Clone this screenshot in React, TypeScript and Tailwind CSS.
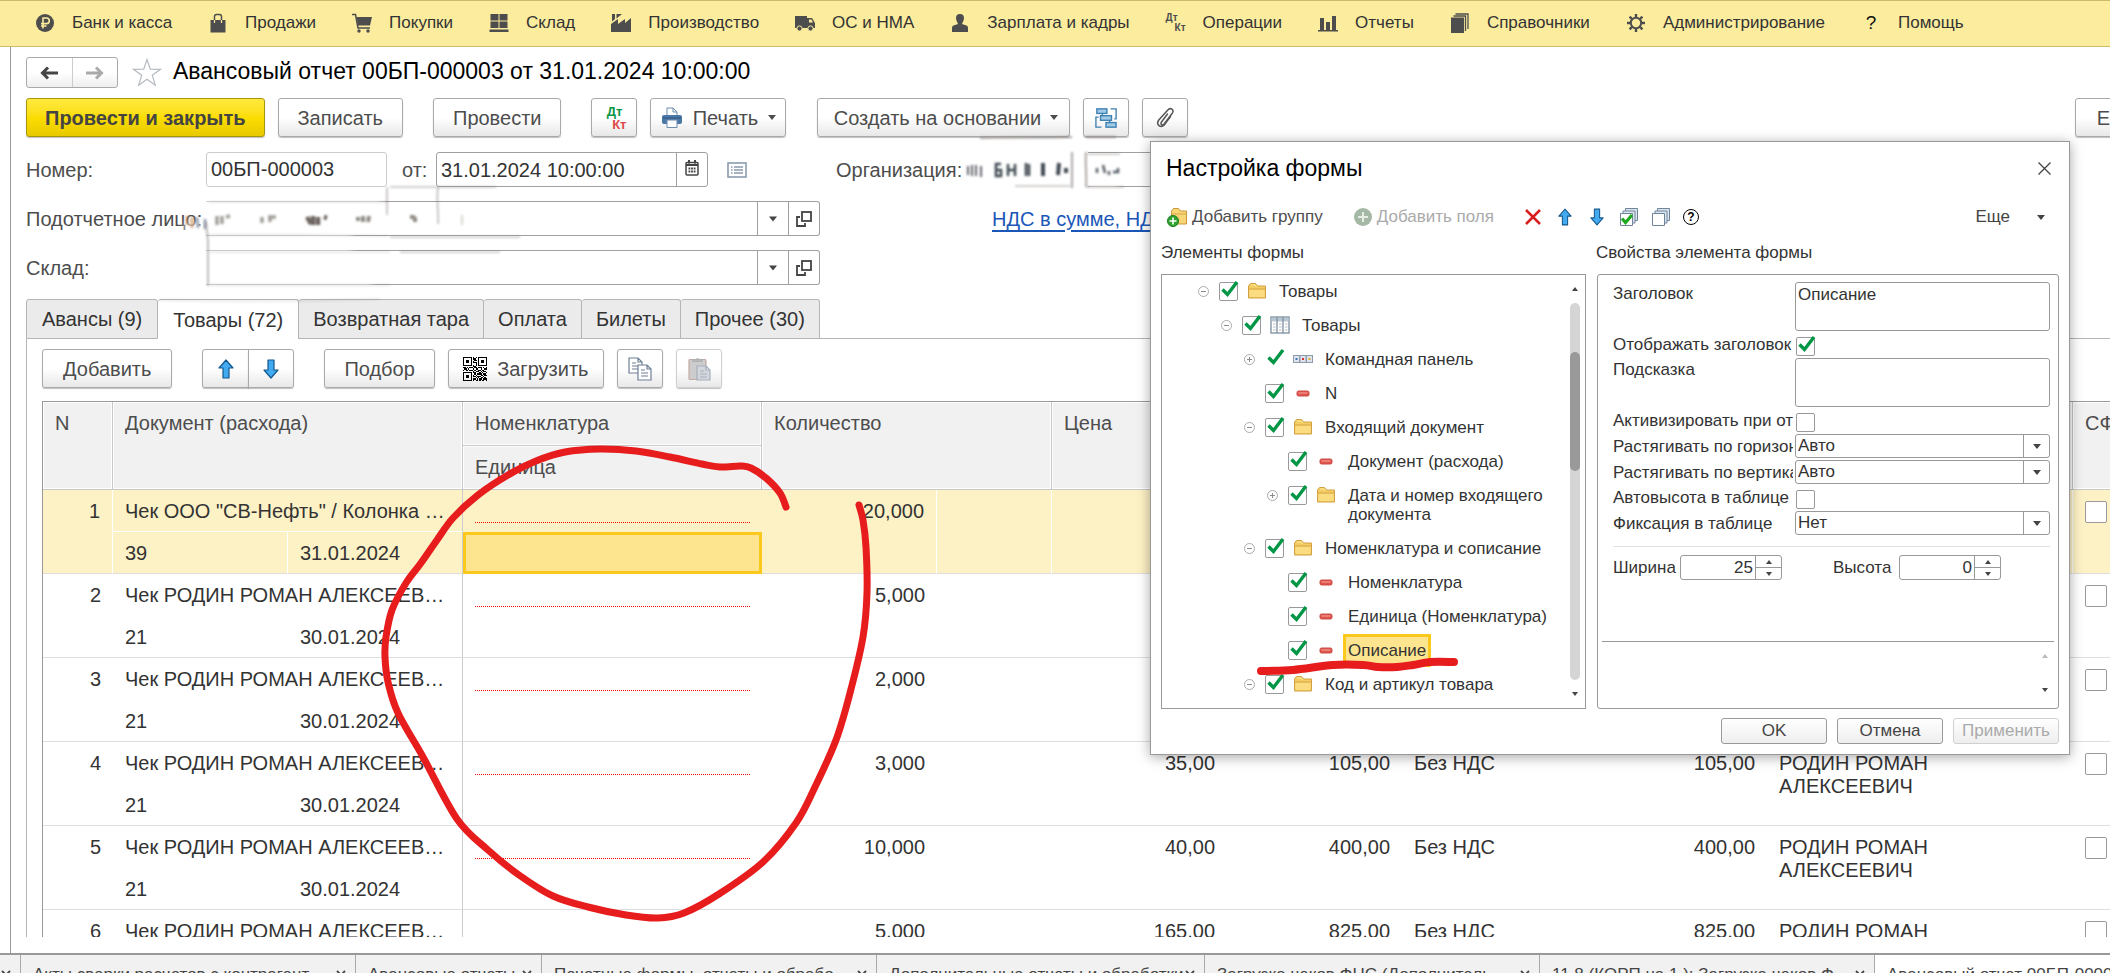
import React from 'react';
import clsx from 'clsx';

/* ---------- icons ---------- */

type IconProps = { className?: string };

const MENU_ICON = 'h-5 w-5 shrink-0 text-[#4d4d4d]';

const RubleIcon = () => (
  <svg viewBox="0 0 20 20" className={MENU_ICON}>
    <circle cx="10" cy="10" r="9" fill="currentColor" />
    <path d="M8 15.500V5h3.500a2.800 2.800 0 010 5.600H6M6 13h5.500" fill="none" stroke="#fbec9e" strokeWidth="1.600" />
  </svg>
);

const BagIcon = () => (
  <svg viewBox="0 0 20 20" className={MENU_ICON}>
    <path d="M2.500 7h15v12.500h-15z" fill="currentColor" />
    <path d="M6.500 10V4a2 2 0 012-2.500h3a2 2 0 012 2.500v6" fill="none" stroke="currentColor" strokeWidth="1.500" />
    <path d="M6.500 7v3M13.500 7v3" stroke="#fbec9e" strokeWidth="1.200" />
  </svg>
);

const CartIcon = () => (
  <svg viewBox="0 0 20 20" className={MENU_ICON}>
    <path d="M0 1.500h3.500L6 15h12" fill="none" stroke="currentColor" strokeWidth="1.500" />
    <path d="M4.500 4H20l-2 8.500H6z" fill="currentColor" />
    <circle cx="7" cy="18" r="1.700" fill="currentColor" />
    <circle cx="16" cy="18" r="1.700" fill="currentColor" />
  </svg>
);

const StockIcon = () => (
  <svg viewBox="0 0 20 20" className={MENU_ICON} fill="currentColor">
    <path d="M1.500 1h8v6.500h-8zM10.500 1h8v6.500h-8zM1.500 8.500h8V15h-8zM10.500 8.500h8V15h-8zM.500 16.500h19V19H.500z" />
  </svg>
);

const FactoryIcon = () => (
  <svg viewBox="0 0 20 20" className={MENU_ICON} fill="currentColor">
    <path d="M0 19v-8l7-5v5l7-5v4l6-5v14zM1 1h3v5l-3 2.500zM5.500 1H11L5.500 5.500z" />
  </svg>
);

const TruckIcon = () => (
  <svg viewBox="0 0 20 20" className={MENU_ICON}>
    <path d="M0 3h12v12H0zM12 5h5l3 5v5h-8z" fill="currentColor" />
    <path d="M14 6.500h2.500l1.500 3h-4z" fill="#fbec9e" />
    <circle cx="4.500" cy="15.500" r="2.600" fill="currentColor" stroke="#fbec9e" />
    <circle cx="15.500" cy="15.500" r="2.600" fill="currentColor" stroke="#fbec9e" />
  </svg>
);

const PersonIcon = () => (
  <svg viewBox="0 0 20 20" className={MENU_ICON} fill="currentColor">
    <path d="M10 1c3 0 4.200 2 4 4.500S12 10.500 12 11l4.500 1.500c1.500.600 1.500 2 1.500 3.500v3H2v-3c0-1.500 0-2.900 1.500-3.500L8 11c0-.500-1.800-3-2-5.500S7 1 10 1z" />
  </svg>
);

const DtKtMenuIcon = () => (
  <span className="flex h-5 w-5 shrink-0 flex-col justify-center text-[10px] leading-[10px] font-bold text-[#4d4d4d]">
    <span>Дт</span>
    <span className="self-end">Кт</span>
  </span>
);

const ChartIcon = () => (
  <svg viewBox="0 0 20 20" className={MENU_ICON} fill="currentColor">
    <path d="M0 17h20v1.500H0zM2 5h4v12H2zM8 9h4v8H8zM14 3h4v14h-4z" />
  </svg>
);

const BooksIcon = () => (
  <svg viewBox="0 0 20 20" className={MENU_ICON}>
    <path d="M1 4.500h13V20H1z" fill="currentColor" />
    <path d="M3.500 3h12v15M5.500 1h12.500v15" fill="none" stroke="currentColor" strokeWidth="1.300" />
  </svg>
);

const GearIcon = () => (
  <svg viewBox="0 0 20 20" className={MENU_ICON} fill="none" stroke="currentColor">
    <circle cx="10" cy="10" r="5.200" strokeWidth="2" />
    <path
      d="M10 1v3M10 16v3M1 10h3M16 10h3M3.600 3.600l2.200 2.200M14.200 14.200l2.200 2.200M3.600 16.400l2.200-2.200M14.200 5.800l2.200-2.200"
      strokeWidth="2.400"
    />
  </svg>
);

const QuestionIcon = () => (
  <span className="w-5 shrink-0 text-center text-[19px] leading-5 text-[#111]">?</span>
);

const ArrowUp = ({ className }: IconProps) => (
  <svg viewBox="0 0 16 20" className={className}>
    <path d="M8 1l7 8h-4v10H5V9H1z" fill="#42aaf0" stroke="#14588c" strokeWidth="1.200" strokeLinejoin="round" />
  </svg>
);

const ArrowDown = ({ className }: IconProps) => (
  <svg viewBox="0 0 16 20" className={className}>
    <path d="M8 19l7-8h-4V1H5v10H1z" fill="#42aaf0" stroke="#14588c" strokeWidth="1.200" strokeLinejoin="round" />
  </svg>
);

const Caret = ({ className }: IconProps) => (
  <svg viewBox="0 0 8 5" className={clsx('h-[5px] w-2 shrink-0', className)}>
    <path d="M0 0h8L4 5z" fill="currentColor" />
  </svg>
);

const CaretUp = ({ className }: IconProps) => (
  <svg viewBox="0 0 6 4" className={clsx('h-1 w-[6px] shrink-0', className)}>
    <path d="M0 4h6L3 0z" fill="currentColor" />
  </svg>
);

const PrinterIcon = () => (
  <svg viewBox="0 0 22 22" className="h-[22px] w-[22px]">
    <path d="M6 9V1h6l4 4v4" fill="#fff" stroke="#6b8bab" />
    <path d="M12 1v4h4" fill="none" stroke="#6b8bab" />
    <rect x="1" y="8" width="20" height="9" rx="2" fill="#4b77a6" />
    <path d="M2 11h18" stroke="#2f5580" />
    <path d="M6 13h10v7.500H6z" fill="#fff" stroke="#6b8bab" />
  </svg>
);

const StructureIcon = () => (
  <svg viewBox="0 0 24 24" className="h-[22px] w-[22px]" fill="#9fcbe9" stroke="#3f80b0" strokeWidth="1.500">
    <rect x="2" y="2" width="11" height="5" />
    <rect x="6" y="9.500" width="12" height="5" />
    <rect x="12" y="17" width="11" height="5" />
    <path d="M17 2h6v11h-2M4 11H1v11h6M8 7v2.500M16 14.500V17" fill="none" />
  </svg>
);

const ClipIcon = () => (
  <svg viewBox="0 0 20 22" className="h-[22px] w-5" fill="none" stroke="#555" strokeWidth="1.500" strokeLinecap="round">
    <path d="M12.500 7l-6 8c-1.500 2.300 1 4 2.600 2l8-10.500c2.600-3.700-1.600-6.700-4.500-3.200L3.800 13c-3.300 4.800 2 8.800 5.700 4.600" />
    <path d="M9.500 17.600l6-8" />
  </svg>
);

const CalendarIcon = () => (
  <svg viewBox="0 0 14 16" className="h-4 w-[14px]">
    <rect x="1" y="2.500" width="12" height="12.500" rx="1" fill="#fff" stroke="#444" strokeWidth="1.500" />
    <path d="M1 5h12" stroke="#444" strokeWidth="2" />
    <path d="M4 0v3.500M10 0v3.500" stroke="#444" strokeWidth="2" />
    <path d="M3.500 8.500h7M3.500 11.500h7" stroke="#444" strokeWidth="1.800" strokeDasharray="1.800 .800" />
  </svg>
);

const ListIcon = () => (
  <svg viewBox="0 0 20 16" className="h-4 w-5" fill="#fff" stroke="#8b9bb0">
    <rect x="1" y="1" width="18" height="14" strokeWidth="1.600" />
    <path d="M4 5h1.500M4 8h1.500M4 11h1.500M7 5h9M7 8h9M7 11h9" strokeWidth="1.400" />
  </svg>
);

const OpenIcon = () => (
  <svg viewBox="0 0 16 16" className="h-4 w-4" fill="none" stroke="#444" strokeWidth="1.800">
    <rect x="6" y="1" width="9" height="9" />
    <path d="M4 6H1v9h8v-3" />
  </svg>
);

const QR_ROWS = [
  '1111111010101111111',
  '1000001011001000001',
  '1011101001101011101',
  '1011101010001011101',
  '1011101011101011101',
  '1000001000101000001',
  '1111111010101111111',
  '0000000011000000000',
  '1101011101101110101',
  '0110100010110010011',
  '1011011101001101100',
  '0000000010111010110',
  '1111111011000101001',
  '1000001001011110110',
  '1011101010100011011',
  '1011101011011100100',
  '1011101000101011010',
  '1000001011010110111',
  '1111111010110101101',
];

const QrIcon = () => (
  <svg viewBox="0 0 19 19" className="h-6 w-6" shapeRendering="crispEdges">
    {QR_ROWS.map((row, y) =>
      [...row].map((bit, x) => (bit === '1' ? <rect key={`${x}-${y}`} x={x} y={y} width="1" height="1" /> : null)),
    )}
  </svg>
);

const CopyIcon = () => (
  <svg viewBox="0 0 24 24" className="h-6 w-6" fill="#fff" stroke="#6f7f95" strokeWidth="1.200">
    <path d="M1 1h9l4 4v11H1zM10 1v4h4M4 6h4M4 9h6M4 12h6" />
    <path d="M10 8h9l4 4v11H10zM19 8v4h4M13 13h4M13 16h7M13 19h7" />
  </svg>
);

const PasteIcon = () => (
  <svg viewBox="0 0 24 24" className="h-6 w-6" fill="#ccc" stroke="#b0b0b0" strokeWidth="1.200">
    <rect x="2" y="2.500" width="17" height="20" rx="1" stroke="#c4aaa2" />
    <path d="M6 4.500h9v-2h-3a2 2 0 00-3 0H6z" fill="#b8b8b8" />
    <path d="M10 9h9l4 4v10H10zM19 9v4h4M13 14h4M13 17h7M13 20h7" fill="#d3d7dc" stroke="#a5afbc" />
  </svg>
);

const FolderIcon = () => (
  <svg viewBox="0 0 20 18" className="h-[18px] w-5 shrink-0">
    <path d="M1.500 16V4l2-2.500h5L10.500 4h8v12z" fill="#f3cd62" stroke="#d3a043" />
    <path d="M2.500 7.500h15V15h-15z" fill="#fbdc81" />
    <path d="M2 7h16" stroke="#d8a548" />
    <path d="M4 3h4l1.500 2" fill="none" stroke="#fdea9f" />
  </svg>
);

const AddFolderIcon = () => (
  <svg viewBox="0 0 22 20" className="h-5 w-[22px]">
    <path d="M5.500 17V4l2-2.500h5L14.500 4h6v13z" fill="#f8d676" stroke="#c9973c" />
    <path d="M6 7h14" stroke="#d8a548" />
    <circle cx="7" cy="14" r="5.500" fill="#2fa32f" stroke="#1c7c1c" />
    <path d="M7 10.500v7M3.500 14h7" stroke="#fff" strokeWidth="1.600" />
  </svg>
);

const AddFieldIcon = () => (
  <svg viewBox="0 0 20 20" className="h-5 w-5">
    <circle cx="10" cy="10" r="9" fill="#a5b8a5" />
    <path d="M10 5v10M5 10h10" stroke="#e6ede6" strokeWidth="2" />
  </svg>
);

const TableIcon = () => (
  <svg viewBox="0 0 20 18" className="h-[18px] w-5 shrink-0">
    <rect x="1" y="1" width="18" height="16" fill="#fff" stroke="#8494a6" strokeWidth="1.400" />
    <path d="M1.500 2h17v3.500h-17z" fill="#b9c6d4" />
    <path d="M7 1v16M13 1v16" stroke="#8494a6" strokeWidth="1.400" />
    <path d="M3 8h2.500M3 11h2.500M3 14h2.500M9 8h2.500M9 11h2.500M9 14h2.500M15 8h2.500M15 11h2.500M15 14h2.500" stroke="#b4bcc6" />
  </svg>
);

const PanelIcon = () => (
  <svg viewBox="0 0 20 18" className="h-[18px] w-5 shrink-0" fill="#dfe5ec" stroke="#8f9cab">
    <rect x=".500" y="5.500" width="6" height="7" />
    <rect x="7" y="5.500" width="6" height="7" />
    <rect x="13.500" y="5.500" width="6" height="7" />
    <path d="M2.500 9h2" stroke="#3f76b5" strokeWidth="2" />
    <path d="M9 9h2" stroke="#e22f2f" strokeWidth="2" />
    <path d="M15.500 9h2" stroke="#e0a92a" strokeWidth="2" />
  </svg>
);

const FieldIcon = () => (
  <svg viewBox="0 0 20 18" className="h-[18px] w-5 shrink-0">
    <rect x="4" y="7" width="12" height="5" rx="1.500" fill="#e0524b" stroke="#c94c46" />
    <path d="M5.500 9h9" stroke="#f5a8a3" />
  </svg>
);

const StackIcon = ({ checked }: { checked?: boolean }) => (
  <svg viewBox="0 0 20 20" className="h-5 w-5" fill="#dce6f0" stroke="#6f8499">
    <path d="M6.500 1.500h12v12h-12z" />
    <path d="M4 4h12v12H4z" />
    <path d="M1.500 6.500h12v12h-12z" fill="#fff" />
    {checked && <path d="M3 11.500l3.500 4L13 8" fill="none" stroke="#1eaa1e" strokeWidth="3.200" />}
  </svg>
);

/* ---------- controls ---------- */

interface ButtonProps extends React.ButtonHTMLAttributes<HTMLButtonElement> {
  primary?: boolean;
}

const Button = ({ primary, className, children, ...props }: ButtonProps) => (
  <button
    type="button"
    className={clsx(
      'flex h-[39px] shrink-0 items-center justify-center rounded-[3px] border text-xl whitespace-nowrap shadow-[0_1px_1px_rgba(0,0,0,0.25)]',
      primary
        ? 'border-[#a8960c] bg-linear-to-b from-[#ffe93c] via-[#fbdd00] to-[#e8c900] font-bold text-[#444]'
        : 'border-[#a9a9a9] bg-linear-to-b from-white from-50% to-[#e8e8e8] text-[#4d4d4d] disabled:border-[#d0d0d0]',
      className,
    )}
    {...props}
  >
    {children}
  </button>
);

interface CheckboxProps extends React.InputHTMLAttributes<HTMLInputElement> {
  bare?: boolean;
  boxSize?: string;
}

const Checkbox = ({ bare, boxSize = 'h-[19px] w-[19px]', ...props }: CheckboxProps) => (
  <span className={clsx('relative block shrink-0', boxSize)}>
    <input
      type="checkbox"
      className={clsx(
        'peer block h-full w-full appearance-none rounded-[2px] border bg-white',
        bare ? 'border-transparent' : 'border-[#999]',
      )}
      {...props}
    />
    <svg
      viewBox="0 0 19 19"
      className="pointer-events-none absolute inset-0 hidden h-full w-full overflow-visible peer-checked:block"
    >
      <path d="M3.500 7.500l5 5L18 0" fill="none" stroke="#009646" strokeWidth="3.400" />
    </svg>
  </span>
);

interface SelectProps {
  id: string;
  value: string;
}

const Select = ({ id, value }: SelectProps) => (
  <div className="relative">
    <select
      id={id}
      defaultValue={value}
      className="block h-6 w-full appearance-none rounded-[3px] border border-[#999] bg-white pl-[2px] text-[17px] leading-[20px]"
    >
      <option>Авто</option>
      <option>Да</option>
      <option>Нет</option>
    </select>
    <span className="pointer-events-none absolute inset-y-0 right-0 flex w-[27px] items-center justify-center border-l border-[#999]">
      <Caret className="text-[#444]" />
    </span>
  </div>
);

const Spinner = ({ id, label, value, className }: { id: string; label: string; value: string; className: string }) => (
  <div className={clsx('flex shrink-0 items-center', className)}>
    <label htmlFor={id} className="flex-1 leading-[22px]">
      {label}
    </label>
    <div className="flex h-[25px] w-[102px] rounded-[3px] border border-[#999]">
      <input id={id} defaultValue={value} className="w-full min-w-0 pr-[2px] text-right" />
      <span className="flex w-[26px] shrink-0 flex-col border-l border-[#999] text-[#444]">
        <button type="button" aria-label="Увеличить" className="flex flex-1 items-center justify-center border-b border-[#999]">
          <CaretUp />
        </button>
        <button type="button" aria-label="Уменьшить" className="flex flex-1 items-center justify-center">
          <CaretUp className="rotate-180" />
        </button>
      </span>
    </div>
  </div>
);

/* ---------- main menu ---------- */

const MENU: [string, () => React.ReactElement][] = [
  ['Банк и касса', RubleIcon],
  ['Продажи', BagIcon],
  ['Покупки', CartIcon],
  ['Склад', StockIcon],
  ['Производство', FactoryIcon],
  ['ОС и НМА', TruckIcon],
  ['Зарплата и кадры', PersonIcon],
  ['Операции', DtKtMenuIcon],
  ['Отчеты', ChartIcon],
  ['Справочники', BooksIcon],
  ['Администрирование', GearIcon],
  ['Помощь', QuestionIcon],
];

const MainMenu = () => (
  <nav className="flex h-[47px] shrink-0 items-center gap-9 overflow-hidden border-y border-[#cdbb6c] bg-[#fbec9e] pb-[2px] pl-[35px]">
    {MENU.map(([title, Icon]) => (
      <a key={title} href="#" className="flex shrink-0 items-center gap-[17px] text-[17px] whitespace-nowrap text-[#333]">
        <Icon />
        {title}
      </a>
    ))}
  </nav>
);

/* ---------- document form ---------- */

const FormHeader = () => (
  <div className="flex h-[31px] items-center">
    <div className="flex h-[31px] w-[92px] rounded-[3px] border border-[#aaa] bg-linear-to-b from-white from-50% to-[#eee]">
      <button type="button" aria-label="Назад" className="flex flex-1 items-center justify-center border-r border-[#ccc]">
        <svg viewBox="0 0 18 14" className="h-[14px] w-[18px]" fill="none" stroke="#444" strokeWidth="3">
          <path d="M18 7H3M8 1.500L2.500 7 8 12.500" />
        </svg>
      </button>
      <button type="button" aria-label="Вперед" className="flex flex-1 items-center justify-center">
        <svg viewBox="0 0 18 14" className="h-[14px] w-[18px]" fill="none" stroke="#aaa" strokeWidth="3">
          <path d="M0 7h15M10 1.500L15.500 7 10 12.500" />
        </svg>
      </button>
    </div>
    <button type="button" aria-label="В избранное" className="ml-[14px]">
      <svg viewBox="0 0 30 29" className="h-[29px] w-[30px]" fill="#fff" stroke="#b5bac0" strokeWidth="1.200">
        <path d="M15 1.500l3.300 9.700 10.200.100-8.200 6 3 9.900-8.300-6-8.300 6 3-9.900-8.200-6 10.200-.100z" />
      </svg>
    </button>
    <h1 className="ml-[11px] pb-[2px] text-[23px] leading-[29px] text-black">
      Авансовый отчет 00БП-000003 от 31.01.2024 10:00:00
    </h1>
  </div>
);

const CommandBar = () => (
  <div className="mt-[10px] flex">
    <Button primary className="px-[18px]">
      Провести и закрыть
    </Button>
    <Button className="ml-[13px] px-[19px]">Записать</Button>
    <Button className="ml-[30px] px-[19px]">Провести</Button>
    <Button aria-label="Проводки" className="ml-[30px] w-[46px]">
      <span className="flex w-6 flex-col text-[13px] leading-[13px] font-bold">
        <span className="text-[#0a9646]">Дт</span>
        <span className="self-end text-[#e04848]">Кт</span>
      </span>
    </Button>
    <Button className="ml-[13px] w-[136px] gap-[10px]">
      <PrinterIcon />
      Печать
      <Caret />
    </Button>
    <Button className="ml-[31px] w-[253px] gap-[9px] pl-1">
      Создать на основании
      <Caret />
    </Button>
    <Button aria-label="Структура подчиненности" className="ml-[13px] w-[46px]">
      <StructureIcon />
    </Button>
    <Button aria-label="Файлы" className="ml-[13px] w-[46px]">
      <ClipIcon />
    </Button>
    <Button className="-mr-[65px] ml-auto w-[100px] gap-2">
      Еще
      <Caret />
    </Button>
  </div>
);

const LookupField = ({ id }: { id: string }) => (
  <div className="flex h-[35px] w-[614px] shrink-0 rounded-r-[3px] border border-l-0 border-[#a0a0a0] text-[#444]">
    <input id={id} className="min-w-0 flex-1 px-1" />
    <button type="button" aria-label="Выбрать" className="flex w-[31px] items-center justify-center border-l border-[#a0a0a0]">
      <Caret className="h-[6px]" />
    </button>
    <button type="button" aria-label="Открыть" className="flex w-[31px] items-center justify-center border-l border-[#a0a0a0]">
      <OpenIcon />
    </button>
  </div>
);

/* Wiped out personal data: soft white patches with leftovers of glyphs and borders. */
const Smears = () => (
  <svg className="pointer-events-none absolute top-0 left-0 h-[310px] w-[1150px]" viewBox="0 0 1150 310">
    <defs>
      <filter id="soft" x="-20%" y="-50%" width="140%" height="200%">
        <feGaussianBlur stdDeviation="3" />
      </filter>
      <filter id="thin" x="-20%" y="-50%" width="140%" height="200%">
        <feGaussianBlur stdDeviation=".800" />
      </filter>
    </defs>
    <g fill="#fff" opacity=".650" filter="url(#soft)">
      <rect x="202" y="196" width="180" height="10" />
      <rect x="202" y="232" width="150" height="8" />
      <rect x="202" y="246" width="150" height="8" />
      <rect x="202" y="281" width="170" height="8" />
      <rect x="1088" y="183" width="30" height="7" />
      <rect x="184" y="222" width="20" height="12" />
    </g>
    <g fill="none" stroke="#8a8480" filter="url(#thin)">
      <path d="M387 187v28M438 187c-2 14 1 26 0 37" strokeWidth="1.500" opacity=".600" />
      <path d="M206 222l2 20v44" strokeWidth="1.800" opacity=".600" />
      <path d="M208 202h180M208 235h100l80 1M210 252h180M210 285h180M160 300c90 2 150 1 220-1" opacity=".350" />
      <path d="M390 187h106M390 237h130M400 252h100" strokeWidth="1.500" opacity=".500" />
      <path d="M1072 152v36M1086 152c-1 12 1 24 0 35" strokeWidth="2" opacity=".700" />
      <path d="M1088 154h32M1015 186h55M1086 187h38" strokeWidth="2" opacity=".400" />
      <path d="M980 138c40-1 60 0 92-1M1086 137h30" strokeWidth="2" opacity=".700" />
    </g>
    <g stroke="#4a4038" fill="none" filter="url(#thin)">
      <path d="M187 216v9M192 217v11" stroke="#c08048" strokeWidth="2.500" opacity=".700" />
      <path d="M197 217l1 11M205 219v10" stroke="#5f6c86" strokeWidth="2.500" opacity=".700" />
      <path d="M217 216v9M222 216v8M226 217l4-1M262 217v6M268 217h8M270 217v5" strokeWidth="3.500" opacity=".500" />
      <path d="M307 217l4 7M313 216v9M318 217v8M324 217l3 1" strokeWidth="4.500" opacity=".800" />
      <path d="M358 217v4M363 216v6M369 216l-1 6M410 217h5M415 217v5" strokeWidth="4" opacity=".600" />
      <path d="M462 215v10" strokeWidth="1.500" opacity=".300" />
    </g>
    <g stroke="#222a35" fill="none" filter="url(#thin)">
      <path d="M968 166v9M972 165v11M976 165v11M981 166v11" strokeWidth="2" opacity=".700" />
      <path d="M1001 164h-5v12h5v-6h-4M1008 164v12M1015 164v12M1008 170h6M1026 163v13M1029 164v12" strokeWidth="2.500" opacity=".850" />
      <path d="M1043 163v13M1059 163l-1 12M1066 168v5" strokeWidth="4" opacity=".850" />
      <path d="M1097 168v5M1103 165l2 8M1109 171v4M1113 172h5v-4" strokeWidth="2.500" opacity=".750" />
    </g>
  </svg>
);

const FormFields = () => (
  <div className="mt-[15px] flex flex-col gap-[14px] text-xl text-[#4d4d4d]">
    <div className="flex h-[35px] items-center">
      <label htmlFor="number" className="w-[180px] shrink-0">
        Номер:
      </label>
      <input
        id="number"
        defaultValue="00БП-000003"
        className="h-[35px] w-[181px] shrink-0 rounded-[3px] border border-[#ccc] px-1 text-[#333]"
      />
      <label htmlFor="date" className="ml-[15px] w-[34px] shrink-0">
        от:
      </label>
      <div className="flex h-[35px] w-[272px] shrink-0 rounded-[3px] border border-[#a0a0a0]">
        <input id="date" defaultValue="31.01.2024 10:00:00" className="min-w-0 flex-1 px-1 text-[#333]" />
        <button type="button" aria-label="Календарь" className="flex w-[31px] items-center justify-center border-l border-[#a0a0a0] pb-1">
          <CalendarIcon />
        </button>
      </div>
      <button type="button" aria-label="Реквизиты" className="ml-[19px] shrink-0">
        <ListIcon />
      </button>
      <label htmlFor="org" className="ml-[89px] w-[252px] shrink-0">
        Организация:
      </label>
      <input id="org" className="h-[35px] w-[300px] shrink-0 border-y border-[#a0a0a0]" />
    </div>
    <div className="flex h-[35px] items-center">
      <label htmlFor="person" className="w-[180px] shrink-0">
        Подотчетное лицо:
      </label>
      <LookupField id="person" />
      <a href="#" className="ml-[172px] shrink-0 whitespace-nowrap text-[#1a56b8] underline underline-offset-4">
        НДС в сумме, НДС
      </a>
    </div>
    <div className="flex h-[35px] items-center">
      <label htmlFor="store" className="w-[180px] shrink-0">
        Склад:
      </label>
      <LookupField id="store" />
    </div>
  </div>
);

const TABS = ['Авансы (9)', 'Товары (72)', 'Возвратная тара', 'Оплата', 'Билеты', 'Прочее (30)'];

const Tabs = () => (
  <div role="tablist" className="mt-[14px] flex h-10 shrink-0 text-xl text-[#333]">
    {TABS.map((tab, i) => (
      <button
        key={tab}
        type="button"
        role="tab"
        aria-selected={i === 1}
        className={clsx(
          'shrink-0 rounded-t-[3px] border-t border-r border-[#b5b5b5] whitespace-nowrap first:border-l',
          i === 1 ? 'bg-white' : 'border-b bg-[#ebebeb]',
          i < 2 ? 'px-[15px]' : 'px-[14px]',
        )}
      >
        {tab}
      </button>
    ))}
    <div className="flex-1 border-b border-[#b5b5b5]" />
  </div>
);

const TableToolbar = () => (
  <div className="mt-[10px] flex">
    <Button className="px-5">Добавить</Button>
    <div className="ml-[30px] flex">
      <Button aria-label="Вверх" className="w-[47px] rounded-r-none">
        <ArrowUp className="h-5 w-4" />
      </Button>
      <Button aria-label="Вниз" className="-ml-px w-[46px] rounded-l-none">
        <ArrowDown className="h-5 w-4" />
      </Button>
    </div>
    <Button className="ml-[30px] px-[19px]">Подбор</Button>
    <Button className="ml-[13px] w-[156px] gap-[10px]">
      <QrIcon />
      Загрузить
    </Button>
    <Button aria-label="Копировать" className="ml-[13px] w-[46px]">
      <CopyIcon />
    </Button>
    <Button aria-label="Вставить" disabled className="ml-[13px] w-[46px]">
      <PasteIcon />
    </Button>
  </div>
);

interface Row {
  n: number;
  doc: string;
  num: string;
  date: string;
  qty: string;
  price: string;
  sum: string;
}

const PURCHASE = 'Чек РОДИН РОМАН АЛЕКСЕЕВ…';

const ROWS: Row[] = [
  { n: 1, doc: 'Чек ООО "СВ-Нефть" / Колонка …', num: '39', date: '31.01.2024', qty: '20,000', price: '', sum: '' },
  { n: 2, doc: PURCHASE, num: '21', date: '30.01.2024', qty: '5,000', price: '', sum: '' },
  { n: 3, doc: PURCHASE, num: '21', date: '30.01.2024', qty: '2,000', price: '', sum: '' },
  { n: 4, doc: PURCHASE, num: '21', date: '30.01.2024', qty: '3,000', price: '35,00', sum: '105,00' },
  { n: 5, doc: PURCHASE, num: '21', date: '30.01.2024', qty: '10,000', price: '40,00', sum: '400,00' },
  { n: 6, doc: PURCHASE, num: '21', date: '30.01.2024', qty: '5,000', price: '165,00', sum: '825,00' },
];

const TH = 'border-r border-b border-[#c8c8c8] bg-[#f1f1f1] px-3 pt-[9px] text-left align-top font-normal leading-6 shadow-[inset_0_0_0_1px_#fff]';

const GoodsRow = ({ row }: { row: Row }) => {
  const active = row.n === 1;
  const cell = 'px-3 pt-[10px] align-top leading-[23px] whitespace-nowrap';
  const tall = clsx(cell, 'border-b border-b-[#dedede]', active && 'border-r border-r-white');
  return (
    <>
      <tr className={clsx('h-[42px]', active && 'bg-[#fdf1c6]')}>
        <td rowSpan={2} className={clsx(tall, 'text-right')}>
          {row.n}
        </td>
        <td colSpan={2} className={clsx(cell, 'border-r border-r-[#ccc]', active && 'border-b border-b-white')}>
          {row.doc}
        </td>
        <td className="px-3 align-top">
          <div className="h-[33px] border-b border-dotted border-[#f00]" />
        </td>
        <td rowSpan={2} className={clsx(tall, 'text-right')}>
          {row.qty}
        </td>
        <td rowSpan={2} className={tall} />
        <td rowSpan={2} className={clsx(tall, 'text-right')}>
          {row.price}
        </td>
        <td rowSpan={2} className={clsx(tall, 'text-right')}>
          {row.sum}
        </td>
        <td rowSpan={2} className={tall}>
          {row.sum && 'Без НДС'}
        </td>
        <td rowSpan={2} className={clsx(tall, 'text-right')}>
          {row.sum}
        </td>
        <td rowSpan={2} className={tall}>
          {row.sum && (
            <>
              РОДИН РОМАН
              <br />
              АЛЕКСЕЕВИЧ
            </>
          )}
        </td>
        <td rowSpan={2} className={tall}>
          <div className="pt-px">
            <Checkbox boxSize="h-[22px] w-[22px]" aria-label={`СФ, строка ${row.n}`} />
          </div>
        </td>
      </tr>
      <tr className={clsx('h-[42px]', active && 'bg-[#fdf1c6]')}>
        <td className={clsx(cell, 'border-b border-b-[#dedede]', active && 'border-r border-r-white')}>{row.num}</td>
        <td className={clsx(cell, 'border-r border-b border-r-[#ccc] border-b-[#dedede]')}>{row.date}</td>
        <td className={active ? 'border-[3px] border-[#fbc91e] bg-[#fde590]' : 'border-b border-[#dedede]'} />
      </tr>
    </>
  );
};

const GoodsTable = () => (
  <div className="mt-[13px] min-h-0 flex-1 overflow-hidden border-t border-l border-[#999]">
    <table className="w-[2190px] table-fixed border-separate border-spacing-0 text-xl text-[#333]">
      <colgroup>
        <col className="w-[70px]" />
        <col className="w-[175px]" />
        <col className="w-[175px]" />
        <col className="w-[299px]" />
        <col className="w-[175px]" />
        <col className="w-[115px]" />
        <col className="w-[175px]" />
        <col className="w-[175px]" />
        <col className="w-[190px]" />
        <col className="w-[175px]" />
        <col className="w-[306px]" />
        <col />
      </colgroup>
      <thead className="text-[#4d4d4d]">
        <tr className="h-11">
          <th rowSpan={2} className={TH}>N</th>
          <th rowSpan={2} colSpan={2} className={TH}>Документ (расхода)</th>
          <th className={TH}>Номенклатура</th>
          <th rowSpan={2} colSpan={2} className={TH}>Количество</th>
          <th rowSpan={2} className={TH}>Цена</th>
          <th rowSpan={2} aria-label="Сумма" className={TH} />
          <th rowSpan={2} aria-label="НДС" className={TH} />
          <th rowSpan={2} aria-label="Всего" className={TH} />
          <th rowSpan={2} aria-label="Поставщик" className={TH} />
          <th rowSpan={2} className={TH}>СФ</th>
        </tr>
        <tr className="h-11">
          <th className={TH}>Единица</th>
        </tr>
      </thead>
      <tbody>
        {ROWS.map((row) => (
          <GoodsRow key={row.n} row={row} />
        ))}
      </tbody>
    </table>
  </div>
);

/* ---------- form settings dialog ---------- */

interface TreeNode {
  label: string;
  level: number;
  icon: () => React.ReactElement;
  toggle?: 'open' | 'closed';
  bare?: boolean;
  selected?: boolean;
}

const TREE: TreeNode[] = [
  { label: 'Товары', level: 0, icon: FolderIcon, toggle: 'open' },
  { label: 'Товары', level: 1, icon: TableIcon, toggle: 'open' },
  { label: 'Командная панель', level: 2, icon: PanelIcon, toggle: 'closed', bare: true },
  { label: 'N', level: 2, icon: FieldIcon },
  { label: 'Входящий документ', level: 2, icon: FolderIcon, toggle: 'open' },
  { label: 'Документ (расхода)', level: 3, icon: FieldIcon },
  { label: 'Дата и номер входящего документа', level: 3, icon: FolderIcon, toggle: 'closed' },
  { label: 'Номенклатура и сописание', level: 2, icon: FolderIcon, toggle: 'open' },
  { label: 'Номенклатура', level: 3, icon: FieldIcon },
  { label: 'Единица (Номенклатура)', level: 3, icon: FieldIcon },
  { label: 'Описание', level: 3, icon: FieldIcon, selected: true },
  { label: 'Код и артикул товара', level: 2, icon: FolderIcon, toggle: 'open' },
];

const LEVEL_PADDING = ['pl-9', 'pl-[59px]', 'pl-[82px]', 'pl-[105px]'];

const Toggle = ({ state }: { state?: 'open' | 'closed' }) => {
  if (!state) return <span className="w-[11px] shrink-0" />;
  return (
    <button type="button" aria-label={state === 'open' ? 'Свернуть' : 'Развернуть'} className="mt-1 shrink-0">
      <svg viewBox="0 0 11 11" className="h-[11px] w-[11px]" fill="none" stroke="#8c8c8c">
        <circle cx="5.500" cy="5.500" r="5" stroke="#aaa" />
        <path d={state === 'open' ? 'M3 5.500h5' : 'M3 5.500h5M5.500 3v5'} />
      </svg>
    </button>
  );
};

const ElementTree = () => (
  <div className="flex h-[435px] w-[425px] shrink-0 overflow-hidden border border-[#999]">
    <ul className="min-w-0 flex-1">
      {TREE.map((node, i) => {
        const Icon = node.icon;
        return (
          <li key={i} className={clsx('flex items-start pt-[7px] pb-2', LEVEL_PADDING[node.level])}>
            <Toggle state={node.toggle} />
            <span className="mr-[9px] ml-[10px]">
              <Checkbox id={`node-${i}`} defaultChecked bare={node.bare} />
            </span>
            <Icon />
            <label
              htmlFor={`node-${i}`}
              className={clsx(
                'leading-[19px]',
                node.selected ? '-my-[7px] ml-[7px] border-[3px] border-[#fbc91e] bg-[#fde590] px-[2px] py-1' : 'ml-3',
              )}
            >
              {node.label}
            </label>
          </li>
        );
      })}
    </ul>
    <div className="flex w-5 shrink-0 flex-col items-center py-3 text-[#444]">
      <CaretUp />
      <div className="my-3 w-[10px] flex-1 rounded-full bg-[#d5d5d5] pt-[49px]">
        <div className="h-[119px] rounded-full bg-[#999]" />
      </div>
      <CaretUp className="rotate-180" />
    </div>
  </div>
);

interface PropertyProps {
  id: string;
  label: string;
  top?: boolean;
  children: React.ReactNode;
}

const Property = ({ id, label, top, children }: PropertyProps) => (
  <div className={clsx('flex gap-[2px]', top ? 'items-start' : 'items-center')}>
    <label htmlFor={id} className="w-[180px] shrink-0 overflow-hidden leading-[23px] whitespace-nowrap">
      {label}
    </label>
    <div className="min-w-0 flex-1">{children}</div>
  </div>
);

const TEXTAREA = 'block h-[49px] w-full resize-none rounded-[3px] border border-[#999] px-[2px] leading-[23px]';

const PropertiesPanel = () => (
  <div className="flex min-w-0 flex-1 flex-col rounded-[3px] border border-[#999]">
    <div className="flex flex-col gap-[2px] pt-[7px] pr-2 pl-[15px]">
      <Property id="p-title" label="Заголовок" top>
        <textarea id="p-title" defaultValue="Описание" className={TEXTAREA} />
      </Property>
      <Property id="p-show" label="Отображать заголовок">
        <div className="flex pt-1 pl-px">
          <Checkbox id="p-show" defaultChecked />
        </div>
      </Property>
      <Property id="p-hint" label="Подсказка" top>
        <textarea id="p-hint" className={TEXTAREA} />
      </Property>
      <Property id="p-activate" label="Активизировать при открытии">
        <div className="flex pt-1 pl-px">
          <Checkbox id="p-activate" />
        </div>
      </Property>
      <Property id="p-hor" label="Растягивать по горизонтали">
        <Select id="p-hor" value="Авто" />
      </Property>
      <Property id="p-ver" label="Растягивать по вертикали">
        <Select id="p-ver" value="Авто" />
      </Property>
      <Property id="p-auto" label="Автовысота в таблице">
        <div className="flex pt-1 pl-px">
          <Checkbox id="p-auto" />
        </div>
      </Property>
      <Property id="p-fix" label="Фиксация в таблице">
        <Select id="p-fix" value="Нет" />
      </Property>
      <div className="mt-[9px] flex border-t border-[#e2e2e2] pt-2">
        <Spinner id="p-width" label="Ширина" value="25" className="w-[169px]" />
        <Spinner id="p-height" label="Высота" value="0" className="ml-[51px] w-[168px]" />
      </div>
    </div>
    <div className="mx-1 mt-auto mb-1 flex h-[63px] flex-col items-end justify-between border-t border-[#999] pt-3 pr-[6px] pb-3">
      <CaretUp className="text-[#bbb]" />
      <CaretUp className="rotate-180 text-[#444]" />
    </div>
  </div>
);

const DialogButton = ({ className, ...props }: React.ButtonHTMLAttributes<HTMLButtonElement>) => (
  <button
    type="button"
    className={clsx(
      'h-[26px] w-[106px] rounded-[3px] border border-[#999] bg-linear-to-b from-white to-[#eee] leading-5 text-[#444]',
      'disabled:border-[#d0d0d0] disabled:text-[#aaa]',
      className,
    )}
    {...props}
  />
);

const SettingsDialog = () => (
  <section
    role="dialog"
    aria-label="Настройка формы"
    className="absolute top-[141px] right-10 flex w-[920px] flex-col border border-[#999] bg-white pb-[10px] text-[17px] text-[#333] shadow-[0_2px_12px_rgba(0,0,0,0.35)]"
  >
    <header className="flex items-center pt-[11px] pr-[18px] pl-[15px]">
      <h2 className="flex-1 text-[23px] leading-[30px] text-black">Настройка формы</h2>
      <button type="button" aria-label="Закрыть">
        <svg viewBox="0 0 13 13" className="h-[13px] w-[13px]" stroke="#444" strokeWidth="1.300">
          <path d="M.500.500l12 12M12.500.500l-12 12" />
        </svg>
      </button>
    </header>
    <div className="mt-[22px] flex h-6 items-center pr-6 pl-[15px]">
      <button type="button" className="flex shrink-0 items-center gap-1 text-[#4d4d4d]">
        <AddFolderIcon />
        Добавить группу
      </button>
      <button type="button" disabled className="ml-[30px] flex shrink-0 items-center gap-1 text-[#aaa]">
        <AddFieldIcon />
        Добавить поля
      </button>
      <div className="ml-[29px] flex items-center gap-3">
        <button type="button" aria-label="Удалить">
          <svg viewBox="0 0 20 20" className="h-5 w-5" stroke="#d81e1e" strokeWidth="2.500">
            <path d="M3 3l14 14M17 3L3 17" />
          </svg>
        </button>
        <button type="button" aria-label="Переместить вверх" className="flex w-5 justify-center">
          <ArrowUp className="h-[18px] w-[14px]" />
        </button>
        <button type="button" aria-label="Переместить вниз" className="flex w-5 justify-center">
          <ArrowDown className="h-[18px] w-[14px]" />
        </button>
        <button type="button" aria-label="Установить все">
          <StackIcon checked />
        </button>
        <button type="button" aria-label="Снять все">
          <StackIcon />
        </button>
        <button
          type="button"
          aria-label="Справка"
          className="h-4 w-4 rounded-full border border-black text-[12px] leading-[14px] font-bold text-black"
        >
          ?
        </button>
      </div>
      <button type="button" className="ml-auto flex items-center gap-[27px] text-[#444]">
        Еще
        <Caret />
      </button>
    </div>
    <div className="mt-3 flex px-[10px] leading-[23px]">
      <h3 className="w-[435px]">Элементы формы</h3>
      <h3>Свойства элемента формы</h3>
    </div>
    <div className="mt-[10px] flex gap-[11px] px-[10px]">
      <ElementTree />
      <PropertiesPanel />
    </div>
    <footer className="mt-[9px] flex justify-end gap-[10px] px-[10px]">
      <DialogButton>OK</DialogButton>
      <DialogButton>Отмена</DialogButton>
      <DialogButton disabled>Применить</DialogButton>
    </footer>
  </section>
);

/* ---------- open windows ---------- */

const WINDOWS: [string, string][] = [
  ['', 'w-[21px]'],
  ['Акты сверки расчетов с контрагент…', 'w-[335px]'],
  ['Авансовые отчеты', 'w-[186px]'],
  ['Печатные формы, отчеты и обрабо…', 'w-[335px]'],
  ['Дополнительные отчеты и обработки', 'w-[328px]'],
  ['Загрузка чеков ФНС (Дополнитель…', 'w-[335px]'],
  ['11.8 (КОРП на 1 ): Загрузка чеков Ф…', 'w-[335px]'],
  ['Авансовый отчет 00БП-000003 …', 'w-[335px]'],
];

const WindowBar = () => (
  <div className="flex h-5 shrink-0 items-start overflow-hidden border-t-2 border-[#999] bg-[#f1f1f1] text-[17px] text-[#444]">
    {WINDOWS.map(([title, width], i) => (
      <div
        key={i}
        className={clsx(
          'flex h-10 shrink-0 items-center border-r border-[#aaa] whitespace-nowrap',
          width,
          i === WINDOWS.length - 1 && 'bg-white',
        )}
      >
        <span className={clsx('min-w-0 flex-1', title && 'pl-3')}>{title}</span>
        <button type="button" aria-label="Закрыть окно" className="mr-[9px] shrink-0">
          <svg viewBox="0 0 10 10" className="h-[10px] w-[10px]" stroke="#444" strokeWidth="1.800">
            <path d="M1 1l8 8M9 1L1 9" />
          </svg>
        </button>
      </div>
    ))}
  </div>
);

/* ---------- red marker ---------- */

type Point = [number, number];

const CIRCLE: Point[] = [
  [786, 507], [780, 493], [766, 478], [751, 468], [741, 466], [720, 467], [702, 464], [670, 457], [636, 451],
  [600, 449], [565, 452], [536, 461], [508, 475], [478, 495], [453, 518], [437, 540], [421, 563], [406, 583],
  [392, 610], [386, 637], [385, 657], [388, 682], [398, 713], [423, 757], [457, 819], [488, 850], [519, 875],
  [553, 896], [588, 907], [626, 915], [658, 918], [684, 913], [719, 894], [763, 862], [796, 823], [815, 787],
  [836, 740], [850, 693], [863, 637], [867, 593], [866, 547], [863, 520], [859, 505],
];

const UNDERLINE: Point[] = [
  [1261, 671], [1293, 670], [1333, 665], [1363, 665], [1378, 667], [1397, 667], [1413, 665], [1430, 662], [1454, 662],
];

/* Catmull-Rom spline through the points, written as cubic segments. */
const smooth = (points: Point[]) =>
  points.slice(1).reduce((d, [x, y], i) => {
    const [px, py] = points[Math.max(i - 1, 0)];
    const [ax, ay] = points[i];
    const [nx, ny] = points[Math.min(i + 2, points.length - 1)];
    return `${d}C${ax + (x - px) / 6} ${ay + (y - py) / 6} ${x - (nx - ax) / 6} ${y - (ny - ay) / 6} ${x} ${y}`;
  }, `M${points[0][0]} ${points[0][1]}`);

const Marker = () => (
  <svg
    className="pointer-events-none absolute top-0 left-0 h-[973px] w-[1500px]"
    viewBox="0 0 1500 973"
    fill="none"
    stroke="#e71d1d"
    strokeLinecap="round"
    strokeLinejoin="round"
  >
    <path d={smooth(CIRCLE)} strokeWidth="7" />
    <path d={smooth(UNDERLINE)} strokeWidth="8" />
  </svg>
);

export default function App() {
  return (
    <div className="relative flex h-screen flex-col overflow-hidden bg-white font-['Liberation_Sans',Arial,sans-serif]">
      <MainMenu />
      <main className="ml-[10px] flex min-h-0 flex-1 flex-col overflow-hidden border-l border-[#999] pt-[10px] pb-4 pl-[15px]">
        <FormHeader />
        <CommandBar />
        <FormFields />
        <Tabs />
        <div className="flex min-h-0 flex-1 flex-col border-l border-[#b5b5b5] pl-[15px]">
          <TableToolbar />
          <GoodsTable />
        </div>
      </main>
      <WindowBar />
      <Smears />
      <SettingsDialog />
      <Marker />
    </div>
  );
}
